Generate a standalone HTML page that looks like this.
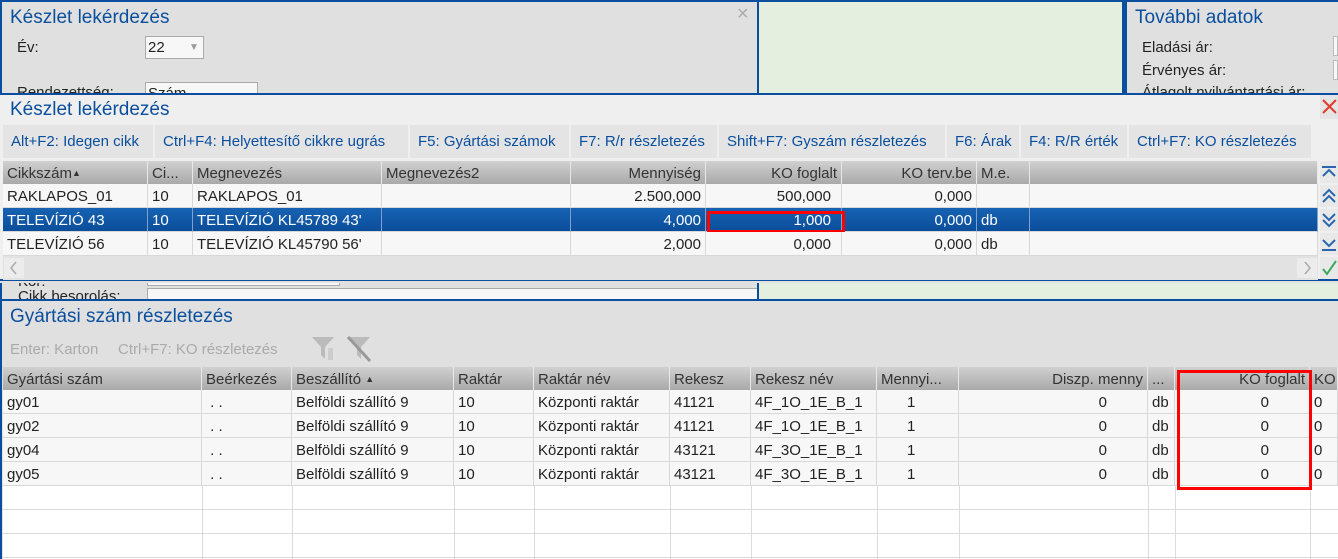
<!DOCTYPE html>
<html><head><meta charset="utf-8"><style>
*{margin:0;padding:0;box-sizing:border-box}
body{width:1338px;height:559px;overflow:hidden;position:relative;background:#e0e0e0;font-family:"Liberation Sans",sans-serif;font-size:15px;color:#222}
.a{position:absolute;white-space:nowrap}
.title{font-size:19px;color:#0a4f9e}
.btn{position:absolute;top:125px;height:33px;background:#e4e4e4;color:#0a4f9e;line-height:34px;padding-left:8px;font-size:15px;white-space:nowrap;overflow:hidden}
.hdr{position:absolute;height:23px;background:linear-gradient(#d0d0d0,#a9a9a9);border-right:1px solid #e8e8e8;line-height:25px;padding:0 4px;overflow:hidden;white-space:nowrap;color:#333}
.c{position:absolute;height:24px;line-height:26px;padding:0 4px;border-right:1px solid #d8d8d8;border-bottom:1px solid #d8d8d8;overflow:hidden;white-space:nowrap;background:#f7f7f7}
.r{text-align:right}
.sel{background:linear-gradient(#1762b3,#0b4e9a);color:#fff;border-right:1px solid #7fa0c8}
.sb{position:absolute;left:1320px;width:18px;height:22px;background:#e8e8e8}
.vl{position:absolute;top:486px;width:1px;height:73px;background:#dcdcdc}
</style></head><body>
<div class="a" style="left:0;top:0;width:757px;height:93px;background:#e0e0e0;border-left:2px solid #0a4f9e;border-top:2px solid #0a4f9e"></div>
<div class="a" style="left:757px;top:0;width:365px;height:93px;background:#e4efdf;border-left:2px solid #0a4f9e;border-top:2px solid #0a4f9e"></div>
<div class="a" style="left:1122px;top:0;width:216px;height:93px;background:#e0e0e0;border-left:5px solid #0a4f9e;border-top:2px solid #0a4f9e"></div>
<div class="a title" style="left:10px;top:7px">Készlet lekérdezés</div>
<div class="a" style="left:737px;top:3px;font-size:20px;color:#aaa">×</div>
<div class="a" style="left:17px;top:39px">Év:</div>
<div class="a" style="left:145px;top:36px;width:59px;height:23px;background:#f7f7f7;border:1px solid #aaa;padding-left:2px;line-height:22px">22<span style="position:absolute;left:43px;top:0;color:#999;font-size:10px">▼</span></div>
<div class="a" style="left:17px;top:84px">Rendezettség:</div>
<div class="a" style="left:145px;top:82px;width:113px;height:14px;background:#f7f7f7;border:1px solid #aaa;padding-left:2px;overflow:hidden;line-height:22px">Szám</div>
<div class="a title" style="left:1135px;top:7px">További adatok</div>
<div class="a" style="left:1142px;top:39px">Eladási ár:</div>
<div class="a" style="left:1142px;top:62px">Érvényes ár:</div>
<div class="a" style="left:1142px;top:84px;height:9px;overflow:hidden">Átlagolt nyilvántartási ár:</div>
<div class="a" style="left:1333px;top:36px;width:5px;height:20px;background:#f7f7f7;border:1px solid #bbb"></div>
<div class="a" style="left:1333px;top:60px;width:5px;height:20px;background:#f7f7f7;border:1px solid #bbb"></div>

<div class="a" style="left:0;top:93px;width:1338px;height:188px;background:#efefef;border-top:2px solid #0a4f9e;border-bottom:2px solid #0a4f9e"></div>
<div class="a title" style="left:10px;top:99px">Készlet lekérdezés</div>
<div class="a" style="left:1320px;top:95px;width:18px;height:24px;background:#e4e4e4"><svg width="18" height="24"><path d="M3 5L16 18M16 5L3 18" stroke="#e03a2a" stroke-width="2"/></svg></div>
<div class="btn" style="left:3px;width:150px">Alt+F2: Idegen cikk</div>
<div class="btn" style="left:155px;width:253px">Ctrl+F4: Helyettesítő cikkre ugrás</div>
<div class="btn" style="left:410px;width:159px">F5: Gyártási számok</div>
<div class="btn" style="left:571px;width:146px">F7: R/r részletezés</div>
<div class="btn" style="left:719px;width:226px">Shift+F7: Gyszám részletezés</div>
<div class="btn" style="left:947px;width:72px">F6: Árak</div>
<div class="btn" style="left:1021px;width:106px">F4: R/R érték</div>
<div class="btn" style="left:1129px;width:182px">Ctrl+F7: KO részletezés</div>

<div class="hdr" style="left:3px;top:161px;width:145px">Cikkszám<span style="font-size:9px;vertical-align:top">▲</span></div>
<div class="hdr" style="left:148px;top:161px;width:45px">Ci...</div>
<div class="hdr" style="left:193px;top:161px;width:189px">Megnevezés</div>
<div class="hdr" style="left:382px;top:161px;width:189px">Megnevezés2</div>
<div class="hdr r" style="left:571px;top:161px;width:135px">Mennyiség</div>
<div class="hdr r" style="left:706px;top:161px;width:136px">KO foglalt</div>
<div class="hdr r" style="left:842px;top:161px;width:135px">KO terv.be</div>
<div class="hdr" style="left:977px;top:161px;width:53px">M.e.</div>
<div class="hdr" style="left:1030px;top:161px;width:288px"></div>

<div class="c" style="left:3px;top:184px;width:145px">RAKLAPOS_01</div>
<div class="c" style="left:148px;top:184px;width:45px">10</div>
<div class="c" style="left:193px;top:184px;width:189px">RAKLAPOS_01</div>
<div class="c" style="left:382px;top:184px;width:189px"></div>
<div class="c r" style="left:571px;top:184px;width:135px">2.500,000</div>
<div class="c r" style="left:706px;top:184px;width:136px;padding-right:10px">500,000</div>
<div class="c r" style="left:842px;top:184px;width:135px">0,000</div>
<div class="c" style="left:977px;top:184px;width:53px"></div>
<div class="c" style="left:1030px;top:184px;width:288px"></div>

<div class="c sel" style="left:3px;top:208px;width:145px">TELEVÍZIÓ 43</div>
<div class="c sel" style="left:148px;top:208px;width:45px">10</div>
<div class="c sel" style="left:193px;top:208px;width:189px">TELEVÍZIÓ KL45789 43'</div>
<div class="c sel" style="left:382px;top:208px;width:189px"></div>
<div class="c sel r" style="left:571px;top:208px;width:135px">4,000</div>
<div class="c sel r" style="left:706px;top:208px;width:136px;padding-right:10px">1,000</div>
<div class="c sel r" style="left:842px;top:208px;width:135px">0,000</div>
<div class="c sel" style="left:977px;top:208px;width:53px">db</div>
<div class="c sel" style="left:1030px;top:208px;width:288px"></div>
<div class="a" style="left:707px;top:211px;width:138px;height:22px;border:3px solid #f00"></div>

<div class="c" style="left:3px;top:232px;width:145px">TELEVÍZIÓ 56</div>
<div class="c" style="left:148px;top:232px;width:45px">10</div>
<div class="c" style="left:193px;top:232px;width:189px">TELEVÍZIÓ KL45790 56'</div>
<div class="c" style="left:382px;top:232px;width:189px"></div>
<div class="c r" style="left:571px;top:232px;width:135px">2,000</div>
<div class="c r" style="left:706px;top:232px;width:136px;padding-right:10px">0,000</div>
<div class="c r" style="left:842px;top:232px;width:135px">0,000</div>
<div class="c" style="left:977px;top:232px;width:53px">db</div>
<div class="c" style="left:1030px;top:232px;width:288px"></div>

<div class="a" style="left:3px;top:256px;width:1315px;height:24px;background:#e2e2e2"></div>
<div class="a" style="left:4px;top:258px;width:20px;height:20px;background:#ececec"><svg width="20" height="20"><path d="M12 4L7 10L12 16" stroke="#aaa" stroke-width="1.5" fill="none"/></svg></div>
<div class="a" style="left:1297px;top:258px;width:20px;height:20px;background:#ececec"><svg width="20" height="20"><path d="M8 4L13 10L8 16" stroke="#aaa" stroke-width="1.5" fill="none"/></svg></div>
<div class="sb" style="top:161px"><svg width="18" height="22"><path d="M2 6H16M3 15L9 9L15 15" stroke="#2a66b0" stroke-width="2" fill="none"/></svg></div>
<div class="sb" style="top:185px"><svg width="18" height="22"><path d="M3 11L9 5L15 11M3 17L9 11L15 17" stroke="#2a66b0" stroke-width="2" fill="none"/></svg></div>
<div class="sb" style="top:209px"><svg width="18" height="22"><path d="M3 5L9 11L15 5M3 11L9 17L15 11" stroke="#2a66b0" stroke-width="2" fill="none"/></svg></div>
<div class="sb" style="top:233px"><svg width="18" height="22"><path d="M3 7L9 13L15 7M2 17H16" stroke="#2a66b0" stroke-width="2" fill="none"/></svg></div>
<div class="sb" style="top:257px"><svg width="18" height="22"><path d="M3 12L7 17L16 4" stroke="#3aaa5a" stroke-width="2" fill="none"/></svg></div>

<div class="a" style="left:0;top:283px;width:757px;height:16px;background:#e0e0e0;border-left:2px solid #0a4f9e;overflow:hidden">
 <div class="a" style="left:16px;top:-10px">Kor:</div>
 <div class="a" style="left:145px;top:-2px;width:193px;height:5px;background:#f7f7f7;border:1px solid #aaa;border-top:none"></div>
 <div class="a" style="left:16px;top:5px">Cikk besorolás:</div>
 <div class="a" style="left:145px;top:5px;width:612px;height:20px;background:#f7f7f7;border:1px solid #aaa"></div>
</div>
<div class="a" style="left:757px;top:283px;width:581px;height:16px;background:#e4efdf;border-left:2px solid #0a4f9e"></div>

<div class="a" style="left:0;top:299px;width:1338px;height:260px;background:#e0e0e0;border-top:2px solid #0a4f9e;border-left:2px solid #0a4f9e"></div>
<div class="a title" style="left:10px;top:306px">Gyártási szám részletezés</div>
<div class="a" style="left:10px;top:341px;color:#aaa">Enter: Karton</div>
<div class="a" style="left:118px;top:341px;color:#aaa">Ctrl+F7: KO részletezés</div>
<svg class="a" style="left:310px;top:335px" width="28" height="28"><path d="M2 2h22l-9 10v12l-4-4v-8z" fill="#bbb"/><rect x="18" y="13" width="5" height="12" fill="#ccc"/></svg>
<svg class="a" style="left:346px;top:335px" width="28" height="28"><path d="M2 2h22l-9 10v12l-4-4v-8z" fill="#bbb"/><path d="M2 2L24 26" stroke="#999" stroke-width="3"/></svg>

<div class="hdr" style="left:3px;top:367px;width:199px">Gyártási szám</div>
<div class="hdr" style="left:202px;top:367px;width:90px">Beérkezés</div>
<div class="hdr" style="left:292px;top:367px;width:162px">Beszállító <span style="font-size:9px;vertical-align:top">▲</span></div>
<div class="hdr" style="left:454px;top:367px;width:80px">Raktár</div>
<div class="hdr" style="left:534px;top:367px;width:136px">Raktár név</div>
<div class="hdr" style="left:670px;top:367px;width:81px">Rekesz</div>
<div class="hdr" style="left:751px;top:367px;width:126px">Rekesz név</div>
<div class="hdr" style="left:877px;top:367px;width:82px">Mennyi...</div>
<div class="hdr r" style="left:959px;top:367px;width:189px">Diszp. menny</div>
<div class="hdr" style="left:1148px;top:367px;width:27px">...</div>
<div class="hdr r" style="left:1175px;top:367px;width:135px">KO foglalt</div>
<div class="hdr" style="left:1310px;top:367px;width:28px">KO</div>

<div class="c" style="left:3px;top:390px;width:199px">gy01</div><div class="c" style="left:202px;top:390px;width:90px">&nbsp;. .</div><div class="c" style="left:292px;top:390px;width:162px">Belföldi szállító 9</div><div class="c" style="left:454px;top:390px;width:80px">10</div><div class="c" style="left:534px;top:390px;width:136px">Központi raktár</div><div class="c" style="left:670px;top:390px;width:81px">41121</div><div class="c" style="left:751px;top:390px;width:126px">4F_1O_1E_B_1</div><div class="c" style="left:877px;top:390px;width:82px;padding-left:30px">1</div><div class="c r" style="left:959px;top:390px;width:189px;padding-right:40px">0</div><div class="c" style="left:1148px;top:390px;width:27px">db</div><div class="c r" style="left:1175px;top:390px;width:135px;padding-right:40px">0</div><div class="c" style="left:1310px;top:390px;width:28px">0</div>
<div class="c" style="left:3px;top:414px;width:199px">gy02</div><div class="c" style="left:202px;top:414px;width:90px">&nbsp;. .</div><div class="c" style="left:292px;top:414px;width:162px">Belföldi szállító 9</div><div class="c" style="left:454px;top:414px;width:80px">10</div><div class="c" style="left:534px;top:414px;width:136px">Központi raktár</div><div class="c" style="left:670px;top:414px;width:81px">41121</div><div class="c" style="left:751px;top:414px;width:126px">4F_1O_1E_B_1</div><div class="c" style="left:877px;top:414px;width:82px;padding-left:30px">1</div><div class="c r" style="left:959px;top:414px;width:189px;padding-right:40px">0</div><div class="c" style="left:1148px;top:414px;width:27px">db</div><div class="c r" style="left:1175px;top:414px;width:135px;padding-right:40px">0</div><div class="c" style="left:1310px;top:414px;width:28px">0</div>
<div class="c" style="left:3px;top:438px;width:199px">gy04</div><div class="c" style="left:202px;top:438px;width:90px">&nbsp;. .</div><div class="c" style="left:292px;top:438px;width:162px">Belföldi szállító 9</div><div class="c" style="left:454px;top:438px;width:80px">10</div><div class="c" style="left:534px;top:438px;width:136px">Központi raktár</div><div class="c" style="left:670px;top:438px;width:81px">43121</div><div class="c" style="left:751px;top:438px;width:126px">4F_3O_1E_B_1</div><div class="c" style="left:877px;top:438px;width:82px;padding-left:30px">1</div><div class="c r" style="left:959px;top:438px;width:189px;padding-right:40px">0</div><div class="c" style="left:1148px;top:438px;width:27px">db</div><div class="c r" style="left:1175px;top:438px;width:135px;padding-right:40px">0</div><div class="c" style="left:1310px;top:438px;width:28px">0</div>
<div class="c" style="left:3px;top:462px;width:199px">gy05</div><div class="c" style="left:202px;top:462px;width:90px">&nbsp;. .</div><div class="c" style="left:292px;top:462px;width:162px">Belföldi szállító 9</div><div class="c" style="left:454px;top:462px;width:80px">10</div><div class="c" style="left:534px;top:462px;width:136px">Központi raktár</div><div class="c" style="left:670px;top:462px;width:81px">43121</div><div class="c" style="left:751px;top:462px;width:126px">4F_3O_1E_B_1</div><div class="c" style="left:877px;top:462px;width:82px;padding-left:30px">1</div><div class="c r" style="left:959px;top:462px;width:189px;padding-right:40px">0</div><div class="c" style="left:1148px;top:462px;width:27px">db</div><div class="c r" style="left:1175px;top:462px;width:135px;padding-right:40px">0</div><div class="c" style="left:1310px;top:462px;width:28px">0</div>

<div class="a" style="left:3px;top:486px;width:1335px;height:73px;background:#fff;background-image:linear-gradient(#dcdcdc,#dcdcdc),linear-gradient(#dcdcdc,#dcdcdc),linear-gradient(#dcdcdc,#dcdcdc);background-size:100% 1px;background-position:0 23px,0 47px,0 71px;background-repeat:no-repeat"></div>
<div class="vl" style="left:202px"></div><div class="vl" style="left:292px"></div><div class="vl" style="left:454px"></div><div class="vl" style="left:534px"></div><div class="vl" style="left:670px"></div><div class="vl" style="left:751px"></div><div class="vl" style="left:877px"></div><div class="vl" style="left:959px"></div><div class="vl" style="left:1148px"></div><div class="vl" style="left:1175px"></div><div class="vl" style="left:1310px"></div>
<div class="a" style="left:1177px;top:370px;width:135px;height:120px;border:3px solid #f00"></div>
</body></html>
